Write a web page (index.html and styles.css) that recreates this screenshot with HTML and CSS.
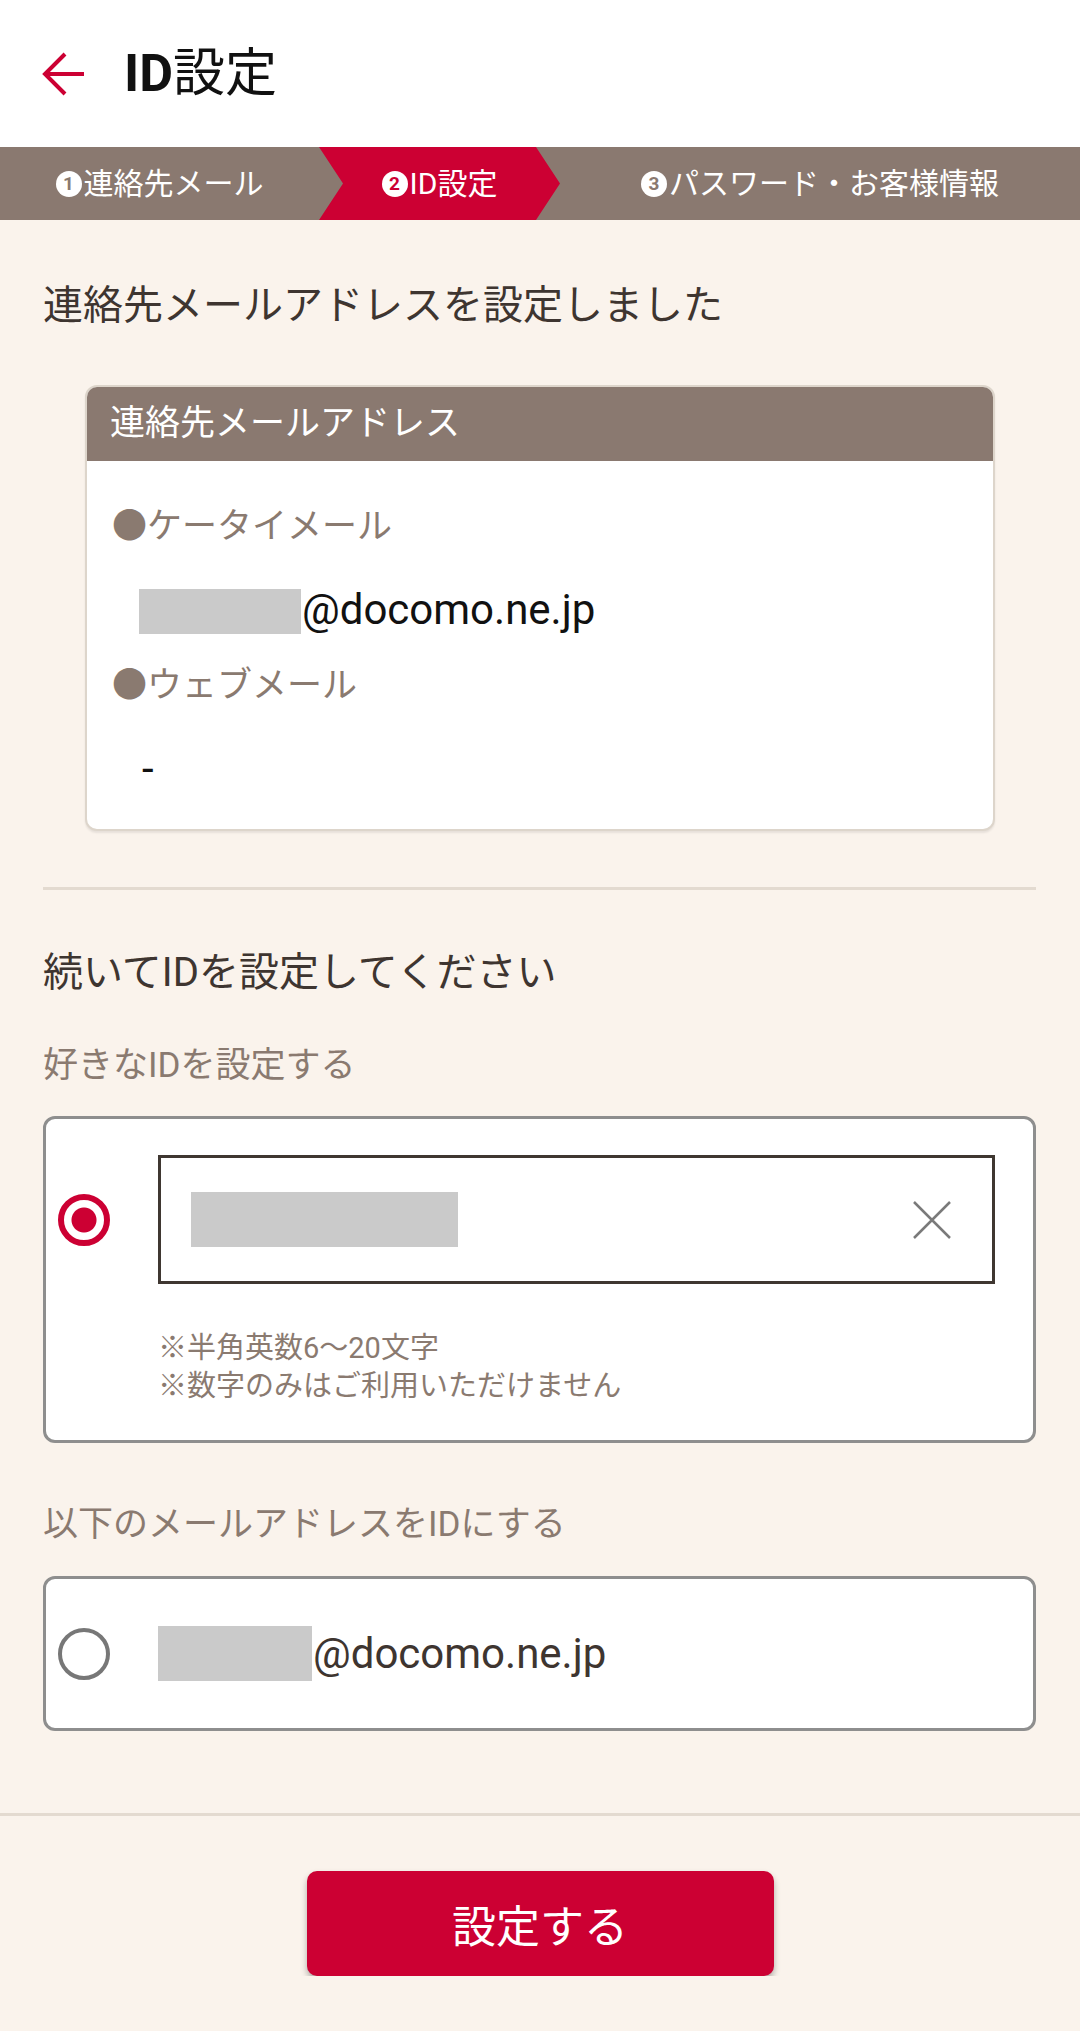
FILE: index.html
```html
<!DOCTYPE html>
<html lang="ja">
<head>
    <meta charset="UTF-8">
    <meta name="viewport" content="width=device-width, initial-scale=1.0">
    <title>ID設定</title>
    <link rel="stylesheet" href="styles.css">
</head>
<body>
    <header class="app-header">
        <svg class="back" viewBox="0 0 44 44" width="44" height="44">
            <path d="M4 22 H43 M24 2 L4 22 L24 42" fill="none" stroke="#cc0033" stroke-width="4"/>
        </svg>
        <h1 class="title"><b>ID</b>設定</h1>
    </header>

    <nav class="steps">
        <div class="step step-first"><span class="num">1</span>連絡先メール</div>
        <div class="step step-current"><span class="num">2</span>ID設定</div>
        <div class="step step-last"><span class="num">3</span>パスワード・お客様情報</div>
    </nav>

    <main class="container">
        <h2 class="heading">連絡先メールアドレスを設定しました</h2>

        <div class="mail-card">
            <div class="mail-card-head">連絡先メールアドレス</div>
            <div class="mail-card-body">
                <p class="mail-label">●ケータイメール</p>
                <p class="mail-value mail-gap"><span class="mask mask-mail"></span>@docomo.ne.jp</p>
                <p class="mail-label label-gap">●ウェブメール</p>
                <p class="mail-value mail-gap mail-empty">-</p>
            </div>
        </div>

        <hr class="divider">

        <h2 class="heading heading-next">続いてIDを設定してください</h2>

        <p class="option-label">好きなIDを設定する</p>
        <div class="option">
            <span class="radio radio-on"></span>
            <div class="id-input">
                <span class="mask mask-input"></span>
                <svg class="clear" viewBox="0 0 40 40" width="40" height="40">
                    <path d="M2 2 L38 38 M38 2 L2 38" fill="none" stroke="#7a7a7a" stroke-width="2.5"/>
                </svg>
            </div>
            <p class="note">※半角英数6〜20文字<br>※数字のみはご利用いただけません</p>
        </div>

        <p class="option-label option-label-gap">以下のメールアドレスをIDにする</p>
        <div class="option option-mail">
            <span class="radio"></span>
            <p class="option-mail-text"><span class="mask mask-option"></span>@docomo.ne.jp</p>
        </div>
    </main>

    <div class="footer">
        <button class="submit" type="button">設定する</button>
    </div>
</body>
</html>
```

FILE: styles.css
```css
body {
    margin: 0;
    background-color: #faf3ec;
    font-family: Roboto, "Noto Sans CJK JP", sans-serif;
    color: #3e3530;
}
p, h1, h2 {
    margin: 0;
    font-weight: normal;
}

/* header */
.app-header {
    height: 147px;
    background-color: #fff;
    display: flex;
    align-items: center;
    padding-left: 41px;
}
.back {
    display: block;
    flex: none;
}
.title {
    margin-left: 39px;
    font-size: 52px;
    line-height: 1;
    color: #111;
}
.title b {
    font-weight: bold;
}

/* steps */
.steps {
    display: flex;
    height: 73px;
    background-color: #8a7970;
}
.step {
    display: flex;
    align-items: center;
    justify-content: center;
    color: #fff;
    font-size: 30px;
    line-height: 1;
}
.step-first {
    width: 319px;
    flex: none;
}
.step-current {
    width: 241px;
    flex: none;
    background-color: #cc0033;
    clip-path: polygon(0 0, 217px 0, 100% 50%, 217px 100%, 0 100%, 24px 50%);
}
.step-last {
    flex: 1;
}
.num {
    width: 26px;
    height: 26px;
    border-radius: 50%;
    background-color: #fff;
    color: #8a7970;
    font-size: 19px;
    font-weight: bold;
    display: inline-flex;
    align-items: center;
    justify-content: center;
    margin-right: 2px;
}
.step-current .num {
    color: #cc0033;
}

/* content */
.container {
    padding: 0 44px 0 43px;
}
.heading {
    margin-top: 58px;
    font-size: 40px;
    line-height: 56px;
    color: #3e3530;
}
.heading-next {
    margin-top: 55px;
}

.mail-card {
    margin: 51px 41px 0 42px;
    background-color: #fff;
    border: 2px solid #ddd5cb;
    border-radius: 12px;
    overflow: hidden;
    box-shadow: 0 2px 2px rgba(0, 0, 0, 0.08);
}
.mail-card-head {
    height: 74px;
    line-height: 74px;
    padding-left: 23px;
    background-color: #8a7970;
    color: #fff;
    font-size: 35px;
}
.mail-card-body {
    padding: 39px 25px 33px;
}
.mail-label {
    font-size: 35px;
    line-height: 54px;
    color: #8a7a70;
}
.label-gap {
    margin-top: 22px;
}
.mail-value {
    padding-left: 27px;
    font-size: 42px;
    line-height: 54px;
    color: #111;
}
.mail-gap {
    margin-top: 29px;
}
.mail-empty {
    padding-left: 30px;
}
.mask {
    display: inline-block;
    background-color: #cacaca;
}
.mask-mail {
    width: 162px;
    height: 45px;
    vertical-align: text-bottom;
    margin-right: 1px;
}

.divider {
    margin: 56px 0 0;
    border: 0;
    height: 3px;
    background-color: #e3dad0;
}

.option-label {
    margin-top: 40px;
    font-size: 35px;
    line-height: 50px;
    color: #8a7a70;
}
.option-label-gap {
    margin-top: 57px;
}
.option {
    margin-top: 25px;
    display: grid;
    grid-template-columns: 52px 1fr;
    column-gap: 48px;
    padding: 36px 38px 35px 12px;
    background-color: #fff;
    border: 3px solid #8e8e8e;
    border-radius: 12px;
}
.radio {
    width: 52px;
    height: 52px;
    box-sizing: border-box;
    border-radius: 50%;
    border: 4px solid #777;
    align-self: center;
}
.radio-on {
    border: 6px solid #cc0033;
    background: radial-gradient(circle, #cc0033 12px, #fff 13px);
}
.id-input {
    height: 129px;
    box-sizing: border-box;
    border: 3px solid #3f3731;
    display: flex;
    align-items: center;
    justify-content: space-between;
    padding: 0 40px 0 30px;
}
.mask-input {
    width: 267px;
    height: 55px;
}
.clear {
    display: block;
}
.note {
    grid-column: 2;
    margin-top: 45px;
    font-size: 29px;
    line-height: 38px;
    color: #8a7a70;
}
.option-mail {
    margin-top: 26px;
    height: 155px;
    box-sizing: border-box;
    padding: 0 38px 0 12px;
    align-items: center;
}
.option-mail-text {
    font-size: 42px;
    line-height: 55px;
    color: #3e3530;
}
.mask-option {
    width: 154px;
    height: 55px;
    vertical-align: bottom;
    margin-right: 1px;
}

/* footer */
.footer {
    margin-top: 82px;
    border-top: 3px solid #e3dad0;
    padding-top: 55px;
    display: flex;
    justify-content: center;
}
.submit {
    width: 467px;
    height: 105px;
    border: none;
    border-radius: 10px;
    background-color: #cc0033;
    color: #fff;
    font-family: Roboto, "Noto Sans CJK JP", sans-serif;
    font-size: 44px;
    box-shadow: 0 4px 6px rgba(0, 0, 0, 0.3);
}
```
